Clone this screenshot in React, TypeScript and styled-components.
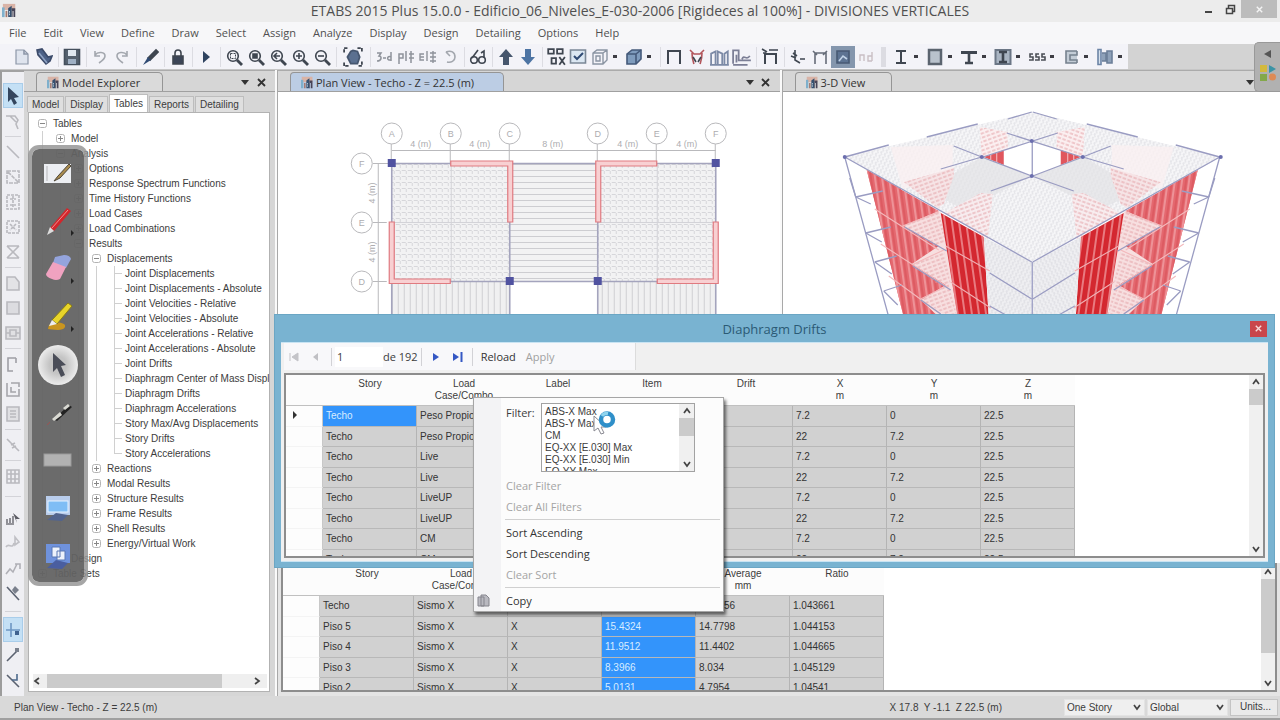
import React from 'react';
import styled, { createGlobalStyle, css } from 'styled-components';

const UI = '"Open Sans", "Noto Sans", sans-serif';
const GRID = '"Liberation Sans", Arial, sans-serif';

const Global = createGlobalStyle`
  * { box-sizing: border-box; }
  body { margin: 0; background: #d8d8d8; font-family: ${UI}; color: #3c3c3c; }
  button, select, input { font: inherit; color: inherit; margin: 0; }
  ul { list-style: none; margin: 0; padding: 0; }
`;

/* ---------- frame ---------- */
const Shell = styled.div`
  position: relative;
  display: flex;
  flex-direction: column;
  height: 100vh;
  overflow: hidden;
`;
const TitleBar = styled.header`
  display: grid;
  grid-template-columns: 82px 1fr 82px;
  height: 22px;
  background: #ececec;
  align-items: start;
`;
const TitleText = styled.h1`
  margin: 0;
  text-align: center;
  font-size: 14px;
  line-height: 21px;
  font-weight: 400;
  color: #505050;
  white-space: nowrap;
`;
const WindowButtons = styled.div`
  display: flex;
  justify-content: flex-end;
  padding-right: 3px;
`;
const WinButton = styled.button<{ $close?: boolean }>`
  width: ${p => (p.$close ? 40 : 24)}px;
  height: 18px;
  border: 0;
  padding: 0;
  display: grid;
  place-items: center;
  background: ${p => (p.$close ? '#bcbcbc' : 'transparent')};
`;
const AppIcon = styled.div`
  padding: 3px 0 0 2px;
  line-height: 0;
`;
const MenuBar = styled.nav`
  display: flex;
  height: 22px;
  padding-left: 1px;
  background: #f7f7f9;
`;
const MenuButton = styled.button`
  border: 0;
  background: none;
  padding: 0 9px 0 8px;
  font-size: 11px;
  line-height: 22px;
  color: #505050;
`;
const Toolbar = styled.div`
  display: flex;
  height: 26px;
  background: #d3d3d3;
  border-bottom: 1px solid #c6c6c6;
`;
const ToolStrip = styled.div`
  display: flex;
  align-items: center;
  padding-left: 11px;
  background: #f3f3f8;
`;
const ToolButton = styled.button<{ $w?: number; $on?: boolean }>`
  display: flex;
  align-items: center;
  justify-content: center;
  flex: none;
  width: ${p => p.$w ?? 22}px;
  height: 22px;
  padding: 0;
  border: 0;
  background: ${p => (p.$on ? '#8496ad' : 'transparent')};
`;
const Caret = styled.i`
  width: 4px;
  height: 3px;
  margin: 0 4px;
  background: #3d3d44;
`;
const ToolSep = styled.span<{ $grip?: boolean }>`
  flex: none;
  width: ${p => (p.$grip ? 13 : 6)}px;
  height: 20px;
  background: linear-gradient(#dcdce2, #dcdce2) center / ${p => (p.$grip ? 5 : 1)}px 100% no-repeat;
`;
const Workspace = styled.main`
  flex: 1;
  min-height: 0;
  display: flex;
`;
const SideTools = styled.div`
  flex: none;
  width: 24px;
  display: flex;
  flex-direction: column;
  align-items: center;
  padding-top: 11px;
  background: #efeff3;
  border-left: 2px solid #9c9c9c;
  border-top: 2px solid #a2a2a2;
`;
const SideButton = styled.button<{ $on?: boolean }>`
  flex: none;
  width: 20px;
  height: 25px;
  padding: 0;
  display: grid;
  place-items: center;
  border: 1px solid ${p => (p.$on ? '#a9cdea' : 'transparent')};
  background: ${p => (p.$on ? '#c4e0f5' : 'transparent')};
`;
const SideSep = styled.span<{ $h: number }>`
  flex: none;
  width: 16px;
  height: ${p => p.$h}px;
  background: linear-gradient(#d3d3d8, #d3d3d8) center / 100% 1px no-repeat;
`;

/* ---------- panels ---------- */
const Panel = styled.section<{ $grow?: number }>`
  ${p => (p.$grow ? css`flex: ${p.$grow} 1 0;` : css`flex: none; width: 251px;`)}
  min-width: 0;
  display: flex;
  flex-direction: column;
  background: #d6d6d6;
  border-top: 1px solid #ababab;
`;
const TabStrip = styled.div`
  display: flex;
  align-items: flex-end;
  height: 21px;
  padding: 0 6px 0 12px;
  border-bottom: 1px solid #a0a0a0;
  background: #d6d6d6;
`;
const DocTab = styled.div<{ $blue?: boolean; $w: number }>`
  display: flex;
  align-items: center;
  gap: 2px;
  width: ${p => p.$w}px;
  height: 19px;
  padding-left: 10px;
  border: 1px solid #959595;
  border-bottom: 0;
  border-radius: 4px 5px 0 0;
  background: ${p => (p.$blue ? '#bccde4' : '#dadada')};
  font-size: 11px;
  white-space: nowrap;
  color: #333;
`;
const StripTools = styled.div`
  margin-left: auto;
  display: flex;
`;
const StripButton = styled.button`
  width: 16px;
  height: 18px;
  padding: 0;
  border: 0;
  background: none;
  display: grid;
  place-items: center;
`;
const PageTabs = styled.div`
  display: flex;
  gap: 1px;
  height: 20px;
  padding: 2px 0 0 3px;
  align-items: flex-end;
`;
const PageTab = styled.button<{ $on?: boolean }>`
  height: ${p => (p.$on ? 18 : 16)}px;
  padding: 0 4px;
  border: 1px solid #bdbdbd;
  border-bottom: 0;
  background: ${p => (p.$on ? '#fff' : '#dfdfdf')};
  font-family: ${GRID};
  font-size: 10px;
  line-height: 14px;
`;
const TreeBox = styled.div`
  flex: 1;
  min-height: 0;
  display: flex;
  flex-direction: column;
  margin: 0 5px 4px 4px;
  padding: 3px 0 3px 4px;
  background: #fff;
  border: 1px solid #b2b2b2;
`;
const Tree = styled.ul`
  flex: 1;
  overflow: hidden;
`;
const TreeRow = styled.li`
  display: flex;
  height: 15px;
  font-family: ${GRID};
  font-size: 10px;
  line-height: 15px;
  white-space: nowrap;
`;
const Guide = styled.span<{ $line?: boolean; $stub?: boolean; $half?: boolean }>`
  flex: none;
  display: grid;
  place-items: center;
  width: 18px;
  height: 15px;
  background-repeat: no-repeat;
  background-image: linear-gradient(${p => (p.$line ? '#d0d0d0, #d0d0d0' : 'transparent, transparent')}),
    linear-gradient(${p => (p.$stub ? '#d0d0d0, #d0d0d0' : 'transparent, transparent')});
  background-size: 1px ${p => (p.$half ? 8 : 15)}px, 8px 1px;
  background-position: 9px 0, 9px 7px;
`;
const TreeLabel = styled.span`
  padding-left: 2px;
`;
const HScroll = styled.div`
  display: grid;
  grid-template-columns: 14px 1fr 14px;
  align-items: center;
  height: 14px;
  margin-right: 2px;
  background: #efefef;
`;
const HThumb = styled.div`
  width: 85%;
  height: 14px;
  background: #cbcbcb;
`;
const Splitter = styled.div`
  flex: none;
  width: 3px;
  background: #fafafa;
  border-right: 1px solid #a8a8a8;
`;
const Documents = styled.div`
  flex: 1;
  min-width: 0;
  display: flex;
  flex-direction: column;
`;
const Views = styled.div`
  flex: 1;
  min-height: 0;
  display: flex;
`;
const Canvas = styled.div`
  flex: 1;
  min-height: 0;
  overflow: hidden;
  background: #fff;
  svg { display: block; width: 100%; height: 224px; }
`;

/* ---------- data grids ---------- */
const ResultsPane = styled.section`
  flex: none;
  height: 133px;
  padding: 0 3px 4px 3px;
  background: #e4e4e4;
`;
const GridFrame = styled.div`
  display: flex;
  height: 100%;
  overflow: hidden;
  background: #fff;
  border: 2px solid #8d8d8d;
`;
const GridArea = styled.div`
  flex: 1;
  min-width: 0;
  overflow: hidden;
`;
const DataTable = styled.table<{ $cols: number }>`
  width: ${p => 37 + 94 * p.$cols}px;
  table-layout: fixed;
  border-collapse: separate;
  border-spacing: 0;
  font-family: ${GRID};
  font-size: 10px;
  line-height: 12px;
  white-space: nowrap;
  thead tr { height: 31px; }
  tbody tr:nth-child(odd) { height: 21px; }
  tbody tr:nth-child(even) { height: 20px; }
  th { font-weight: 400; vertical-align: top; padding: 3px 0 0; background: #fcfcfc; border-bottom: 1px solid #c0c0c0; }
`;
const Corner = styled.col` width: 37px; `;
const Col = styled.col` width: 94px; `;
const Cell = styled.td<{ $sel?: boolean; $head?: boolean }>`
  padding: 0 0 0 3px;
  overflow: hidden;
  border-right: 1px solid ${p => (p.$head ? '#c8c8c8' : '#b4b4b4')};
  border-bottom: 1px solid ${p => (p.$head ? '#f4f4f4' : '#b8b8b8')};
  background: ${p => (p.$head ? '#fdfdfd' : p.$sel ? '#3394fb' : '#d1d1d1')};
  color: ${p => (p.$sel ? '#d8ecff' : '#333')};
`;
const VScroll = styled.div<{ $w?: number }>`
  flex: none;
  display: flex;
  flex-direction: column;
  align-items: center;
  width: ${p => p.$w ?? 14}px;
  background: #f0f0f0;
`;
const VArrow = styled.span<{ $end?: boolean }>`
  height: 14px;
  display: grid;
  place-items: center;
  ${p => p.$end && 'margin-top: auto;'}
`;
const VThumb = styled.div<{ $h: number }>`
  width: 100%;
  height: ${p => p.$h}px;
  background: #cbcbcb;
`;

/* ---------- drifts window ---------- */
const Dialog = styled.section`
  position: absolute;
  left: 274px;
  right: 5px;
  top: 314px;
  height: 254px;
  display: flex;
  flex-direction: column;
  padding: 0 6px 5px;
  background: #79b3d1;
  border: 1px solid #6ba6c4;
`;
const DialogTitle = styled.div`
  display: grid;
  grid-template-columns: 18px 1fr 18px;
  align-items: center;
  height: 27px;
  text-align: center;
  h2 { margin: 0; font-size: 13px; font-weight: 400; color: #2b5a75; }
`;
const CloseButton = styled.button`
  width: 17px;
  height: 16px;
  padding: 0;
  border: 0;
  display: grid;
  place-items: center;
  background: #c9464b;
`;
const DialogBody = styled.div`
  flex: 1;
  min-height: 0;
  display: flex;
  flex-direction: column;
  padding: 0 3px 3px;
  background: #f0f0f0;
  border: 1px solid #c9e4f3;
  border-width: 1px 0 1px 0;
`;
const NavBar = styled.div`
  display: flex;
  align-items: center;
  width: 352px;
  height: 27px;
  margin-bottom: 3px;
  background: #f8f8fa;
  border-right: 1px solid #dcdcdc;
  font-size: 11px;
`;
const NavButton = styled.button<{ $dim?: boolean; $w?: number }>`
  display: grid;
  place-items: center;
  width: ${p => (p.$w ? p.$w + 'px' : 'auto')};
  height: 22px;
  padding: ${p => (p.$w ? 0 : '0 5px')};
  border: 0;
  background: none;
  color: ${p => (p.$dim ? '#a0a0a0' : '#333')};
`;
const NavSep = styled.span`
  width: 1px;
  height: 18px;
  margin: 0 3px;
  background: #d2d2d6;
`;
const RecordInput = styled.input`
  width: 48px;
  height: 20px;
  padding: 0 2px;
  border: 0;
  background: #fff;
`;
const FrameSlot = styled.div`
  flex: 1;
  min-height: 0;
`;

/* ---------- context menu ---------- */
const PopupMenu = styled.div`
  position: absolute;
  left: 473px;
  top: 397px;
  width: 251px;
  height: 215px;
  padding: 5px 3px 0 0;
  background: linear-gradient(90deg, #f3f3f5 27px, #fcfcfc 27px);
  border: 1px solid #a6a6a6;
  box-shadow: 2px 3px 3px rgba(0, 0, 0, 0.55);
  font-size: 11px;
`;
const FilterRow = styled.div`
  display: flex;
  padding-left: 32px;
  margin-bottom: 3px;
  label { width: 35px; line-height: 20px; }
`;
const ListBox = styled.div`
  display: flex;
  width: 154px;
  height: 69px;
  border: 1px solid #a2a2a2;
  background: #fff;
`;
const List = styled.select`
  flex: 1;
  min-width: 0;
  height: 67px;
  padding: 2px 0 0;
  border: 0;
  outline: 0;
  overflow: hidden;
  background: #fff;
  font-family: ${GRID};
  font-size: 10px;
  scrollbar-width: none;
  option { height: 12px; min-height: 12px; line-height: 12px; padding: 0 3px; }
`;
const PopupItem = styled.button`
  position: relative;
  display: flex;
  align-items: center;
  width: 100%;
  height: 21px;
  padding: 0 0 0 32px;
  border: 0;
  background: none;
  color: #333;
  &:disabled { color: #a4a4a4; }
  svg { position: absolute; left: 3px; }
`;
const PopupRule = styled.hr`
  height: 1px;
  margin: 2px 0 2px 31px;
  border: 0;
  background: #d0d0d0;
`;
const BusyCursor = styled.svg`
  position: absolute;
  left: 590px;
  top: 408px;
`;

/* ---------- overlays ---------- */
const PenBar = styled.div`
  position: absolute;
  left: 28px;
  top: 145px;
  width: 60px;
  height: 441px;
  display: flex;
  flex-direction: column;
  align-items: center;
  justify-content: space-between;
  padding: 4px 0 5px;
  border: 4px solid rgba(150, 150, 150, 0.85);
  border-radius: 11px;
  background: rgba(98, 98, 98, 0.94);
  background-clip: padding-box;
`;
const PenButton = styled.button<{ $on?: boolean }>`
  width: 40px;
  height: 40px;
  padding: 0;
  border: 0;
  border-radius: 50%;
  display: grid;
  place-items: center;
  background: ${p => (p.$on ? 'radial-gradient(#c4c4c4 30%, #f0f0f0 75%)' : 'none')};
`;
const Gadget = styled.aside`
  position: absolute;
  right: 0;
  top: 42px;
  width: 26px;
  height: 50px;
  display: flex;
  flex-direction: column;
  align-items: center;
  gap: 6px;
  padding-top: 7px;
  border-radius: 5px 0 0 5px;
  background: #b1b1b1;
  border: 1px solid #999;
  border-right: 0;
`;
const StatusBar = styled.footer`
  display: flex;
  align-items: center;
  height: 24px;
  padding: 0 2px 0 14px;
  gap: 2px;
  background: #d9d9d9;
  border-bottom: 2px solid #a0a0a0;
  font-family: ${GRID};
  font-size: 10px;
`;
const Coords = styled.span`
  margin-left: auto;
  padding-right: 60px;
  white-space: pre;
`;
const StatusSelect = styled.div`
  position: relative;
  display: flex;
  align-items: center;
  width: 81px;
  height: 17px;
  background: #efefef;
  border: 1px solid #e3e3e3;
  select { width: 100%; appearance: none; border: 0; background: none; padding: 0 2px; }
  svg { position: absolute; right: 3px; pointer-events: none; }
`;
const UnitsButton = styled.button`
  width: 48px;
  height: 17px;
  padding: 0 9px;
  text-align: left;
  border: 1px solid #c4c4c4;
  background: #eaeaea;
  white-space: nowrap;
  line-height: 14px;
`;

/* ---------- icons ---------- */
const D = '#3f4650';
const G = '#a3a7ae';

const Ico = ({ children, s = 18 }: { children: React.ReactNode; s?: number }) => (
  <svg width={s} height={s} viewBox="0 0 18 18" fill="none" stroke={D} strokeWidth="1.6">{children}</svg>
);
const Logo = ({ s = 17 }: { s?: number }) => (
  <svg width={s} height={s} viewBox="0 0 17 17">
    <rect x="1" y="1" width="14" height="7" fill="#d9b3a6" />
    <path d="M0 5h3v11h-3z" fill="#7fb0cc" />
    <path d="M4 9h2v7h-2z" fill="#a4786e" />
    <path d="M7 6l4-3v13h-4z" fill="#35506f" />
    <path d="M11 6h4v10h-2v-7h-1v7h-1z" fill="#474457" />
    <path d="M8 9h1v2h-1zM8 12h1v2h-1z" fill="#c8dcea" />
  </svg>
);
const Glass = ({ inner }: { inner: React.ReactNode }) => (
  <Ico><circle cx="8" cy="8" r="5.3" /><path d="M12 12l5 5" strokeWidth="2.8" />{inner}</Ico>
);

const icons: Record<string, React.ReactNode> = {
  'New model': <Ico><path d="M3 2h8l4 4v10H3z" fill="#dfe4ee" stroke="#8d97a8" strokeWidth="1.2" /><path d="M11 2v4h4" stroke="#8d97a8" /></Ico>,
  Open: <Ico><path d="M2 2l5-1 6 8 4-1-2 5-4 3-8-9z" fill="#4c6187" stroke="#3b4a69" /><path d="M4 5l8 10" stroke="#8ea2c2" /></Ico>,
  Save: <Ico><path d="M1.500 1.500h15v15h-15z" fill="#55616f" stroke="#444f5c" /><path d="M5 2h8v6H5z" fill="#dfe7f0" stroke="none" /><path d="M5 11h8v5H5z" fill="#9fb0c4" stroke="none" /></Ico>,
  Undo: <Ico><path d="M4 7c3-4 10-3 10 1 0 3-3 5-6 7M4 3v5h5" stroke={G} /></Ico>,
  Redo: <Ico><path d="M14 7C11 3 4 4 4 8c0 3 3 5 6 7M14 3v5H9" stroke={G} /></Ico>,
  Refresh: <Ico><path d="M7 10l8-8 2 2-8 8z" fill={D} /><path d="M7 9l3 3-8 5z" fill="#2f4a73" stroke="none" /></Ico>,
  Lock: <Ico><path d="M4 8h10v8H4z" fill="#3c4557" /><path d="M6 8V5a3 3 0 0 1 6 0v3" /></Ico>,
  Run: <Ico><path d="M6 3l7 6-7 6z" fill="#2f4360" stroke="none" /></Ico>,
  'Rubber band zoom': <Glass inner={<path d="M5.500 5.500h5v5h-5z" strokeDasharray="2 1" strokeWidth="1" />} />,
  'Full view': <Glass inner={<path d="M6 6h4v4H6z" fill={D} />} />,
  'Previous zoom': <Glass inner={<path d="M5 8h6M8 5L5 8l3 3" />} />,
  'Zoom in': <Glass inner={<path d="M5 8h6M8 5v6" />} />,
  'Zoom out': <Glass inner={<path d="M5 8h6" />} />,
  Pan: <Ico s={20}><path d="M1 5V1h4M13 1h4v4M17 13v4h-4M5 17H1v-4" strokeDasharray="3 1" /><path d="M4 9l3-5 2-1 4 1 2 5-2 6H7z" fill="#5b7090" stroke="#46566f" /></Ico>,
  '3-D': <Ico><path d="M2 5h4l-2 3c3 0 3 5-2 5M8 10h3M16 4v9M16 9c-4-2-5 4 0 3" stroke="#8f939b" strokeWidth="1.500" /></Ico>,
  Plan: <Ico><path d="M2 16V6h4v4H2M9 3v10M12 6h5M12 10h5M14 3v12" stroke="#8f939b" strokeWidth="1.500" /></Ico>,
  Elevation: <Ico><path d="M5 6H1v6h4M1 9h4M8 3v10M11 5h6M11 9h6M11 13h6M14 3v12" stroke="#8f939b" strokeWidth="1.400" /></Ico>,
  Rotate: <Ico><path d="M5 4c5-2 9 0 9 5 0 4-4 6-8 5M5 4l4 4" stroke={G} /></Ico>,
  Perspective: <Ico><circle cx="5" cy="12" r="3.300" /><circle cx="13" cy="12" r="3.300" /><path d="M3 10l6-8M15 10V3l-3 2" /></Ico>,
  'Story up': <Ico><path d="M9 1l7 8h-4v8H6V9H2z" fill="#46566d" stroke="none" /></Ico>,
  'Story down': <Ico><path d="M9 17l7-8h-4V1H6v8H2z" fill="#4d74a3" stroke="none" /></Ico>,
  'Object shrink': <Ico s={20}><path d="M2 2h5v4H2zM10 2h5v4h-5zM5 10h4v5H5zM12 9l5 7M17 9l-5 7" /></Ico>,
  'View options': <Ico><path d="M1.500 2h15v13h-15z" fill="#dbe7f2" stroke="#7b8896" /><path d="M5 8l3 3 6-6" stroke="#2f4a73" strokeWidth="2" /></Ico>,
  Extrusion: <Ico><path d="M2 5l4-3h10v10l-4 4H2zM2 5h10v11M12 5l4-3M5 8h4v5H5z" stroke="#8b95a3" strokeWidth="1.400" /></Ico>,
  Solid: <Ico><path d="M2 6l5-4h9v9l-5 5H2z" fill="#7f9cbd" stroke="#44597a" /><path d="M2 6h9v10M11 6l5-4" stroke="#44597a" /></Ico>,
  Undeformed: <Ico><path d="M3 16V3h12v13" strokeWidth="2" /></Ico>,
  Deformed: <Ico><path d="M2 2l4 4h6l4-4M4 5c0 6 1 8 2 11M14 5c0 6-1 8-2 11" stroke="#b3565c" /><path d="M5 9l3 5M13 9l-3 5" stroke={D} /></Ico>,
  Forces: <Ico s={20}><path d="M1 16V6l4-2v12M7 16V4l4 2v10M13 16V6l3-2v12M0 16h17" stroke="#7c8aa6" /></Ico>,
  Stresses: <Ico s={20}><path d="M1 15V3h5v9h11M4 14V7M9 11c2-5 4 2 7-3M1 16h13" stroke="#7c7f96" /></Ico>,
  Loads: <Ico><path d="M4 16V6h11v10" strokeWidth="2" /><path d="M1 1l5 3M8 2h9M2 5h3" /></Ico>,
  Axes: <Ico><path d="M6 2v10l5 3M2 8l5 2M11 11h5M4 5l4 3" /></Ico>,
  Releases: <Ico><path d="M4 16V5h11v11M2 3l4 4M16 3l-4 4" stroke="#666c78" /></Ico>,
  Shading: <Ico><path d="M3 3h12v12H3z" fill="#5d7392" stroke="#485a74" /><path d="M5 13l4-5 4 3" stroke="#c0d2e6" /></Ico>,
  Named: <Ico><path d="M3 13V7h4v6M15 4v9M15 8h-4v5h4" stroke="#c9bfc4" strokeWidth="1.400" /></Ico>,
  'Steel frame': <Ico><path d="M4 3h10M4 15h10M9 3v12" strokeWidth="2" /></Ico>,
  'Concrete frame': <Ico><path d="M3 2h12v14H3z" fill="#b9c2cc" strokeWidth="2.500" stroke="#5b646f" /></Ico>,
  'Composite beam': <Ico><path d="M1 3h16v3H1z" fill={D} stroke="none" /><path d="M5 15h8M9 5v10" strokeWidth="2.600" /></Ico>,
  'Composite column': <Ico><path d="M1.500 2h15v14h-15z" fill="#a9b4c2" stroke="#6b7685" strokeWidth="2" /><path d="M5 4h8M5 14h8M9 4v10" strokeWidth="2.600" /></Ico>,
  Joists: <Ico><path d="M5 6H2v3h3v3H1M11 6H8v3h3v3H7M17 6h-3v3h3v3h-4" stroke="#4b4f55" /></Ico>,
  'Shear wall': <Ico><path d="M15 3H4v12h11M15 3v4H8v5h7v3" fill="#c3ccd6" stroke="#76818e" /></Ico>,
  Connection: <Ico><path d="M2 1.500h3v15H2z" fill="#d5e0ec" stroke="#6c84a6" /><path d="M6 5h4v8H6M11 3h5v12h-5z" fill="#8ea1b9" stroke="#6c7f99" /></Ico>,
};

type Tool = { i: string; w?: number; on?: boolean; drop?: boolean };
const tools: (string | Tool)[] = [
  'New model', 'Open', '|', 'Save', '|', 'Undo', 'Redo', '|', 'Refresh', '|', 'Lock', '|', 'Run', '|',
  'Rubber band zoom', 'Full view', 'Previous zoom', 'Zoom in', 'Zoom out', '|', { i: 'Pan', w: 28 }, '|',
  '3-D', 'Plan', 'Elevation', 'Rotate', '|', 'Perspective', '|', 'Story up', 'Story down', '|', 'Object shrink', 'View options',
  { i: 'Extrusion', drop: true }, { i: 'Solid', drop: true }, '|', 'Undeformed', { i: 'Deformed', w: 24 }, 'Forces', 'Stresses', '|',
  'Loads', '|', 'Axes', 'Releases', { i: 'Shading', w: 24, on: true }, 'Named', '||',
  ...['Steel frame', 'Concrete frame', 'Composite beam', 'Composite column', 'Joists', 'Shear wall', 'Connection'].map(i => ({ i, drop: true })),
];

const S = '#b9b9be';
const sideShapes: Record<string, React.ReactNode> = {
  Select: <path d="M4 0l11 10-5 1 3 5-3 2-3-6-3 3z" fill="#34465f" stroke="none" />,
  Reshape: <path d="M2 4h9l3 4-2 4 2 5M6 4l6 6" stroke={S} />,
  'Draw beam': <path d="M3 3l12 12" stroke={S} />,
  'Quick beam': <path d="M3 3h12v12H3zM14 14L4 4" stroke={S} strokeDasharray="4 1" />,
  'Quick column': <path d="M3 2h12v14H3zM9 3v12M6 6h6M6 12h6" stroke={S} strokeDasharray="3 1" />,
  'Quick secondary': <path d="M3 3h12v12H3zM6 6l6 6M12 6l-6 6" stroke={S} strokeDasharray="3 1" />,
  'Quick brace': <path d="M3 3l12 12M15 3L3 15M3 3h12M3 15h12" stroke={S} />,
  'Draw floor': <path d="M3 3h8l4 5v8H3z" stroke={S} fill="#e3e3e6" />,
  'Rectangular floor': <path d="M3 3h12v12H3z" stroke={S} fill="#dcdce0" />,
  'Quick floor': <path d="M2 3h14v12H2zM6 6h6v6H6zM2 9h4M12 9h4" stroke={S} fill="#e0e0e3" />,
  'Draw wall': <path d="M12 3H4v13h5M12 3v5" stroke="#9f9fa5" />,
  'Quick wall': <path d="M3 3v13h12V9M7 3h8v4M7 7v5h5" stroke="#a5a5ab" />,
  'Wall opening': <path d="M3 2h12v14H3zM6 6h6M6 9h6M6 12h6" stroke={S} fill="#e0e0e3" />,
  'Draw link': <path d="M3 3l12 12M7 9l4-2M8 12l4-2" stroke={S} />,
  'Draw grid': <path d="M3 3h12v13H3zM7 3v13M11 3v13M3 7h12M3 12h12" stroke={S} />,
  'Select all': <><path d="M3 14v-4M6 14V9M9 14V7M2 15h8" stroke="#77777e" /><path d="M9 4l7 6h-4l1 4z" fill="#5c5c64" stroke="none" /></>,
  'Previous selection': <path d="M2 13c3-5 6 3 8-4M11 3v8l4-3z" stroke="#c0c0c5" />,
  'Clear selection': <path d="M2 15l4-5 3 3 4-8M11 5h5v5" stroke="#b0b0b6" />,
  'Snap lines': <><path d="M3 3l12 13" stroke="#5b6270" /><path d="M11 2l4 4-4 4-3-4z" fill="#7a808c" stroke="none" /></>,
  'Snap points': <><path d="M2 9h14M7 2v14" stroke="#6e97c4" /><path d="M11 10h4v4h-4z" fill="#3f628f" stroke="none" /></>,
  'Snap ends': <><path d="M3 15L14 4" stroke="#5b6270" /><path d="M11 2h4v4h-4z" fill="#7a808c" stroke="none" /></>,
  'Snap perpendicular': <><path d="M3 4l12 12" stroke="#5b6270" /><path d="M13 3v6H8" stroke="#4d6a8c" /></>,
};
const side: (string | number)[] = [
  'Select', 'Reshape', 6, 'Draw beam', 'Quick beam', 'Quick column', 'Quick secondary', 'Quick brace', 6,
  'Draw floor', 'Rectangular floor', 'Quick floor', 6, 'Draw wall', 'Quick wall', 'Wall opening', 6, 'Draw link', 6, 'Draw grid', 17,
  'Select all', 'Previous selection', 'Clear selection', 'Snap lines', 12, 'Snap points', 'Snap ends', 'Snap perpendicular',
];

const Chevron = ({ dir, s = 8 }: { dir: 'up' | 'down' | 'left' | 'right'; s?: number }) => {
  const d = { up: 'M1 6l3-4 3 4', down: 'M1 2l3 4 3-4', left: 'M6 1L2 4l4 3', right: 'M2 1l4 3-4 3' }[dir];
  return <svg width={s} height={s} viewBox="0 0 8 8" fill="none" stroke="#444" strokeWidth="1.700"><path d={d} /></svg>;
};
const Cross = ({ c = '#333', s = 9 }: { c?: string; s?: number }) => (
  <svg width={s} height={s} viewBox="0 0 9 9" stroke={c} strokeWidth="1.800"><path d="M1 1l7 7M8 1L1 8" /></svg>
);
const StripControls = ({ close = true }: { close?: boolean }) => (
  <StripTools>
    <StripButton aria-label="Window list"><svg width="8" height="5" viewBox="0 0 8 5"><path d="M0 0h8L4 5z" fill="#333" /></svg></StripButton>
    {close ? <StripButton aria-label="Close pane"><Cross /></StripButton> : <StripButton aria-hidden />}
  </StripTools>
);

/* ---------- explorer tree ---------- */
type Node = { t: string; d: number; g?: '+' | '-'; last?: boolean };
const leafs = ['Joint Displacements', 'Joint Displacements - Absolute', 'Joint Velocities - Relative', 'Joint Velocities - Absolute',
  'Joint Accelerations - Relative', 'Joint Accelerations - Absolute', 'Joint Drifts', 'Diaphragm Center of Mass Displacements',
  'Diaphragm Drifts', 'Diaphragm Accelerations', 'Story Max/Avg Displacements', 'Story Drifts', 'Story Accelerations'];
const tree: Node[] = [
  { t: 'Tables', d: 0, g: '-' }, { t: 'Model', d: 1, g: '+' }, { t: 'Analysis', d: 1, g: '-' },
  ...['Options', 'Response Spectrum Functions', 'Time History Functions', 'Load Cases', 'Load Combinations'].map(t => ({ t, d: 2, g: '+' as const })),
  { t: 'Results', d: 2, g: '-' }, { t: 'Displacements', d: 3, g: '-' },
  ...leafs.map((t, i) => ({ t, d: 4, last: i === leafs.length - 1 })),
  ...['Reactions', 'Modal Results', 'Structure Results', 'Frame Results', 'Shell Results', 'Energy/Virtual Work'].map(t => ({ t, d: 3, g: '+' as const })),
  { t: 'Design', d: 1, g: '+' }, { t: 'Table Sets', d: 0, g: '+' },
];
const Expander = ({ g }: { g: '+' | '-' }) => (
  <svg width="9" height="9" viewBox="0 0 9 9" fill="#fff" stroke="#b4b4b4">
    <rect x="0.500" y="0.500" width="8" height="8" rx="2" /><path d={g === '+' ? 'M2 4.500h5M4.500 2v5' : 'M2 4.500h5'} stroke="#888" />
  </svg>
);

/* ---------- drawings ---------- */
const cx = [392, 451, 510, 598, 657, 716];
const label = { fontSize: 9, fontFamily: 'Liberation Sans', fill: '#adadb0', stroke: 'none', textAnchor: 'middle' as const };
const PlanDrawing = () => (
  <svg viewBox="278 92 502 224" preserveAspectRatio="xMidYMin slice" fill="none">
    <defs>
      <pattern id="mesh" width="6" height="6" patternUnits="userSpaceOnUse"><path d="M0 2.500h4M4.500 3v3" stroke="#d6d6da" /></pattern>
      <pattern id="rows" width="10" height="6" patternUnits="userSpaceOnUse"><path d="M0 2.500h10" stroke="#cdcdd1" /></pattern>
      <pattern id="bars" width="6" height="10" patternUnits="userSpaceOnUse"><path d="M2.500 0v10" stroke="#cfcfd2" /></pattern>
    </defs>
    <path d="M392 163h324v118H392z" fill="#f2f2f3" />
    <path d="M392 163h118v118H392zM598 163h118v118H598z" fill="url(#mesh)" />
    <path d="M510 163h88v118h-88z" fill="url(#rows)" />
    <path d="M392 281h118v40H392zM598 281h118v40H598z" fill="#f0f0f1" />
    <path d="M392 281h118v40H392zM598 281h118v40H598z" fill="url(#bars)" />
    <g stroke="#d3d3d8"><path d="M451.500 163v118M657.500 163v118M392 222.500h118M598 222.500h118" /></g>
    <g stroke="#b9b9bc">
      <path d="M392 150.500h324M378.500 163v160M373 163.500h20M373 222.500h14M373 281.500h14" />
      {cx.map((x, i) => <g key={x}><circle cx={x} cy="133.500" r="10.500" fill="#fff" /><path d={`M${x - 0.5} 144v19`} /><text {...label} x={x} y="137">{'ABCDEF'[i]}</text></g>)}
      {[163, 222, 281].map((y, i) => <g key={y}><circle cx="362" cy={y + 0.5} r="10.500" fill="#fff" /><text {...label} x="362" y={y + 4}>{'FED'[i]}</text></g>)}
    </g>
    <g>
      {[[421, 4], [480, 4], [553, 8], [628, 4], [687, 4]].map(([x, n]) => <text {...label} key={x} x={x} y="147">{n} (m)</text>)}
      <text {...label} transform="translate(375 193) rotate(-90)">4 (m)</text>
      <text {...label} transform="translate(375 252) rotate(-90)">4 (m)</text>
    </g>
    <g stroke="#a4a4bd" strokeWidth="1.600">
      <path d="M392 163.500h324M392 281.500h324M392 163v160M510 163v160M598 163v160M716 163v160" />
    </g>
    <g stroke="#e07a80" fill="#f8d0d2" strokeWidth="1.200">
      <path d="M451 161h62v61h-5v-56h-57z" /><path d="M657 161h-61v61h5v-56h56z" />
      <path d="M389.500 222v61.500h61v-4.500h-56v-57z" /><path d="M718.500 222v61.500h-61v-4.500h56v-57z" />
    </g>
    <g fill="#5052a0">{[[392, 163], [716, 163], [510, 281], [598, 281]].map(([x, y]) => <rect key={`${x}-${y}`} x={x - 4} y={y - 4} width="8" height="8" />)}</g>
  </svg>
);

const HalfTower = () => (
  <g>
    <path d="M866 170L940 212 957 317H903z" fill="#f7dfe0" />
    <path d="M866 170L900 187 914 317H903z" fill="#e98d92" />
    <path d="M866 170L938 211 902 226l36 20-27 18 34 21-25 15 18 17H903z" fill="#e4686f" />
    <path d="M866 170L938 211 902 226l36 20-27 18 34 21-25 15 18 17H903z" fill="url(#ribs)" />
    <path d="M902 225l36-13 8 30-12 4zM911 264l32-14 7 34-10 3zM920 300l28-15 8 29h-12z" fill="url(#pinkmesh)" />
    <path d="M940 213l43 24 5 80h-31z" fill="#d5262e" />
    <path d="M940 213l43 24 5 80h-31z" fill="url(#ribs)" />
    <path d="M983 237l48 25v55h-43z" fill="#efeff2" />
    <path d="M983 237l48 25v55h-43z" fill="url(#greymesh)" />
    <g stroke="#f3b9bc" strokeWidth="1.100" fill="none">
      <path d="M874 209l64 41M880 244l65 42M888 276l52 38M938 212l-36 14M943 250l-32 15M948 285l-28 14" /><path d="M945 246l44 25M950 282l40 26" stroke="#efb0b4" />
    </g>
  </g>
);
const TowerLines = () => (
  <g>
    <path d="M844 157l187 105M844 157l44 160" /><path d="M844 157l44-12M926 137l51-13M1007 119l24-7" />
    <path d="M855 197l27-6M865 233l25-6M874 262l22-6M883 291l18-6M855 197l15 7M865 233l16 9M874 262l17 12M883 291l14 14M849 178l6 19" />
    <path d="M904 227l42 24M912 266l38 24M920 300l20 14M989 273l42 26M989 306l16 9" />
    <path d="M1006 133l75 24M953 146l28 11 50 19 42 15M940 169l41-12" />
  </g>
);
const TowerDrawing = () => (
  <svg viewBox="782 92 498 224" preserveAspectRatio="xMidYMin slice" fill="none">
    <defs>
      <pattern id="ribs" width="7" height="12" patternUnits="userSpaceOnUse" patternTransform="rotate(-8)"><path d="M1 0v12" stroke="#f3a9ad" strokeWidth="1.300" /><path d="M4 0v12" stroke="#c8323a" strokeWidth="0.800" strokeOpacity="0.600" /></pattern>
      <pattern id="pinkmesh" width="5" height="4" patternUnits="userSpaceOnUse" patternTransform="rotate(-20)"><path d="M0 1h3.500" stroke="#e3a0a5" /></pattern>
      <pattern id="greymesh" width="4" height="4" patternUnits="userSpaceOnUse" patternTransform="rotate(28)"><path d="M0 1h2M2 2v1.500" stroke="#d3d3d9" strokeWidth="0.900" /></pattern>
    </defs>
    <HalfTower />
    <g transform="translate(2063 0) scale(-1 1)"><HalfTower /></g>
    <path d="M844 157l187-45 189 45-189 105z" fill="#f6f6f8" />
    <path d="M844 157l187-45 189 45-189 105z" fill="url(#greymesh)" />
    <path d="M945 178l36-21 50 19 52-19 36 21v22l-20 10-68-34-68 34-18-10z" fill="#e2e2e6" fillOpacity="0.700" />
    {[0, 1].map(i => (
      <g key={i} transform={i ? 'translate(2063 0) scale(-1 1)' : undefined}>
        <path d="M890 147l62-2v30l-50 14z" fill="#faf0f1" fillOpacity="0.800" />
        <path d="M903 182l50-14v8l-10 28-6 4z" fill="#f6e4e6" /><path d="M903 182l50-14v8l-10 28-6 4z" fill="url(#pinkmesh)" />
        <path d="M979 127l28 5v20l-26 5z" fill="#fbeff0" /><path d="M979 127l28 5v20l-26 5z" fill="url(#pinkmesh)" />
        <path d="M944 213l36-20 12 1-5 45z" fill="#f8ecee" fillOpacity="0.900" /><path d="M944 213l36-20 12 1-5 45z" fill="url(#pinkmesh)" />
      </g>
    ))}
    <path d="M1031 141l50 16-50 19-50-19z" fill="#fff" />
    <path d="M983 157l20-7v15zM1080 157l-20-7v15z" fill="#e0565d" /><path d="M990 154v6M996 152v11M1067 152v11M1073 154v6" stroke="#f6c5c8" />
    <g stroke="#9a9cc2" strokeWidth="1.300"><TowerLines /><g transform="translate(2063 0) scale(-1 1)"><TowerLines /></g><path d="M1031.500 141v35M1031.500 262v55" /></g>
    <g fill="#6c6fae">{[[844, 157], [1220, 157], [1031, 141], [1031, 176], [981, 157], [1082, 157]].map(([x, y]) => <circle key={`${x}-${y}`} cx={x} cy={y} r="2" />)}</g>
  </svg>
);

/* ---------- table content ---------- */
const driftCols = [['Story'], ['Load', 'Case/Combo'], ['Label'], ['Item'], ['Drift'], ['X', 'm'], ['Y', 'm'], ['Z', 'm']];
const cases = ['Peso Propio', 'Peso Propio', 'Live', 'Live', 'LiveUP', 'LiveUP', 'CM', 'CM'];
const driftRows = cases.map((c, i) => ['Techo', c, '', '', '', i % 2 ? '22' : '7.2', i % 2 ? '7.2' : '0', '22.5']);
const dispCols = [['Story'], ['Load', 'Case/Combo'], ['Item'], ['Maximum', 'mm'], ['Average', 'mm'], ['Ratio']];
const dispRows = [
  ['Techo', 'Sismo X', 'X', '18.7604', '17.9756', '1.043661'],
  ['Piso 5', 'Sismo X', 'X', '15.4324', '14.7798', '1.044153'],
  ['Piso 4', 'Sismo X', 'X', '11.9512', '11.4402', '1.044665'],
  ['Piso 3', 'Sismo X', 'X', '8.3966', '8.034', '1.045129'],
  ['Piso 2', 'Sismo X', 'X', '5.0131', '4.7954', '1.04541'],
];
const Grid = ({ cols, rows, selected, marker }: { cols: string[][]; rows: string[][]; selected: (r: number, c: number) => boolean; marker?: boolean }) => (
  <DataTable $cols={cols.length}>
    <colgroup><Corner />{cols.map((_, i) => <Col key={i} />)}</colgroup>
    <thead><tr><th />{cols.map((c, i) => <th key={i} scope="col">{c.map((l, k) => <React.Fragment key={k}>{k > 0 && <br />}{l}</React.Fragment>)}</th>)}</tr></thead>
    <tbody>
      {rows.map((r, i) => (
        <tr key={i}>
          <Cell $head>{marker && i === 0 && <svg width="9" height="8" viewBox="0 0 9 8"><path d="M4 0l4 4-4 4z" fill="#333" /></svg>}</Cell>
          {r.map((v, k) => <Cell key={k} $sel={selected(i, k)}>{v}</Cell>)}
        </tr>
      ))}
    </tbody>
  </DataTable>
);

/* ---------- annotation palette ---------- */
const Flyout = <path d="M33 29l3 3-3 3z" fill="#222" />;
const pens: [string, React.ReactNode][] = [
  ['Page', <><rect x="6" y="11" width="27" height="19" fill="#eceef2" /><path d="M9 13v15" stroke="#b5b5b8" /><path d="M16 28l4-5 11-12 2 2-11 12z" fill="#a98b4e" stroke="#4d4638" /></>],
  ['Pen', <><path d="M12 27L29 7l4 3-17 20z" fill="#d3262c" /><path d="M14 27L30 9" stroke="#f08d8f" /><path d="M12 26l4 4-7 4z" fill="#ddd" />{Flyout}</>],
  ['Eraser', <><path d="M17 8l9-2q6 0 7 4l-5 9-13-5z" fill="#94a4dd" /><path d="M15 13l13 5-6 12q-4 2-8 0-6-2-6-5z" fill="#f0a2c0" />{Flyout}</>],
  ['Highlighter', <><path d="M11 28c4-4 18-3 16 2s-14 2-17 2z" fill="#c9951f" /><path d="M14 23L30 6l4 3-15 18z" fill="#e8d52a" stroke="#8a7c16" /><path d="M14 23l5 4-8 2z" fill="#eee" />{Flyout}</>],
  ['Pick', <path d="M15 8l13 12-5 1 4 9-4 2-4-9-4 4z" fill="#4a4d58" />],
  ['Pointer', <><path d="M16 26l15-14 3 2-15 14z" fill="#222" /><path d="M14 26l8-7 2 3-8 6zM25 15l5-4 2 2-5 4z" fill="#d9d9d2" /><path d="M9 32l3-3" stroke="#9b5252" /></>],
  ['Ruler', <rect x="6" y="13" width="27" height="12" fill="#b2b2b2" stroke="#9a9a9a" />],
  ['Screen', <><rect x="8" y="7" width="24" height="19" fill="#b9cdec" /><rect x="10" y="12" width="20" height="11" fill="#7fbdf5" stroke="#e7f3ff" /><path d="M9 31l9-7 12 2-6 6z" fill="#52648e" /></>],
  ['Pages', <><rect x="8" y="7" width="24" height="19" fill="#6f92dc" /><path d="M14 10h8v10h-8zM19 14h8v9h-8z" fill="#eef3fb" stroke="#5b78b4" /><path d="M9 31l9-8 12 3-6 6z" fill="#4a5ea0" /></>],
];

const menus = ['File', 'Edit', 'View', 'Define', 'Draw', 'Select', 'Assign', 'Analyze', 'Display', 'Design', 'Detailing', 'Options', 'Help'];

export default function App() {
  return (
    <Shell>
      <Global />
      <TitleBar>
        <AppIcon><Logo s={15} /></AppIcon>
        <TitleText>ETABS 2015 Plus 15.0.0 - Edificio_06_Niveles_E-030-2006 [Rigideces al 100%] - DIVISIONES VERTICALES</TitleText>
        <WindowButtons>
          <WinButton aria-label="Minimize"><svg width="9" height="9"><path d="M1 6h7v2H1z" fill="#444" /></svg></WinButton>
          <WinButton aria-label="Restore"><svg width="11" height="11" fill="none" stroke="#444"><path d="M1.500 4.500h6v5h-6zM3.500 4V1.500h6v6H8" strokeWidth="1.500" /></svg></WinButton>
          <WinButton $close aria-label="Close"><Cross c="#f4f4f4" s={7} /></WinButton>
        </WindowButtons>
      </TitleBar>
      <MenuBar>{menus.map(m => <MenuButton key={m}>{m}</MenuButton>)}</MenuBar>
      <Toolbar>
        <ToolStrip>
          {tools.map((t, i) => {
            if (t === '|' || t === '||') return <ToolSep key={i} $grip={t === '||'} />;
            const o: Tool = typeof t === 'string' ? { i: t } : t;
            return (
              <ToolButton key={i} aria-label={o.i} $w={o.drop ? 34 : o.w} $on={o.on}>
                {icons[o.i]}{o.drop && <Caret />}
              </ToolButton>
            );
          })}
        </ToolStrip>
      </Toolbar>

      <Workspace>
        <SideTools>
          {side.map((s, i) => typeof s === 'number'
            ? <SideSep key={i} $h={s} />
            : <SideButton key={i} aria-label={s} $on={s === 'Select' || s === 'Snap points'}><Ico>{sideShapes[s]}</Ico></SideButton>)}
        </SideTools>

        <Panel>
          <TabStrip>
            <DocTab $w={127}><Logo s={13} />Model Explorer</DocTab>
            <StripControls />
          </TabStrip>
          <PageTabs>
            {['Model', 'Display', 'Tables', 'Reports', 'Detailing'].map(t => <PageTab key={t} $on={t === 'Tables'}>{t}</PageTab>)}
          </PageTabs>
          <TreeBox>
            <Tree>
              {tree.map((n, i) => (
                <TreeRow key={i}>
                  {Array.from({ length: n.d }, (_, k) => <Guide key={k} $line />)}
                  <Guide $line={!n.g} $stub={!n.g} $half={n.last}>{n.g && <Expander g={n.g} />}</Guide>
                  <TreeLabel>{n.t}</TreeLabel>
                </TreeRow>
              ))}
            </Tree>
            <HScroll><Chevron dir="left" /><HThumb /><Chevron dir="right" /></HScroll>
          </TreeBox>
        </Panel>
        <Splitter />

        <Documents>
          <Views>
            <Panel $grow={502}>
              <TabStrip>
                <DocTab $blue $w={214}><Logo s={13} />Plan View - Techo - Z = 22.5 (m)</DocTab>
                <StripControls />
              </TabStrip>
              <Canvas><PlanDrawing /></Canvas>
            </Panel>
            <Splitter />
            <Panel $grow={498}>
              <TabStrip>
                <DocTab $w={97}><Logo s={13} />3-D View</DocTab>
                <StripControls close={false} />
              </TabStrip>
              <Canvas><TowerDrawing /></Canvas>
            </Panel>
          </Views>
          <ResultsPane>
            <GridFrame>
              <GridArea><Grid cols={dispCols} rows={dispRows} selected={(r, c) => c === 3 && r > 0} /></GridArea>
              <VScroll>
                <VArrow><Chevron dir="up" /></VArrow><VThumb $h={74} /><VArrow $end><Chevron dir="down" /></VArrow>
              </VScroll>
            </GridFrame>
          </ResultsPane>
        </Documents>
      </Workspace>

      <StatusBar>
        <span>Plan View - Techo - Z = 22.5 (m)</span>
        <Coords>{'X 17.8  Y -1.1  Z 22.5 (m)'}</Coords>
        <StatusSelect><select aria-label="Story scope"><option>One Story</option></select><Chevron dir="down" /></StatusSelect>
        <StatusSelect><select aria-label="Coordinate system"><option>Global</option></select><Chevron dir="down" /></StatusSelect>
        <UnitsButton>Units...</UnitsButton>
      </StatusBar>

      <Dialog>
        <DialogTitle><span /><h2>Diaphragm Drifts</h2><CloseButton aria-label="Close"><Cross c="#f6dada" s={7} /></CloseButton></DialogTitle>
        <DialogBody>
          <NavBar>
            <NavButton $w={20} aria-label="First"><svg width="10" height="10"><path d="M1 1v8M9 1v8L3 5z" fill="#c4c4c8" stroke="#c4c4c8" /></svg></NavButton>
            <NavButton $w={24} aria-label="Previous"><svg width="8" height="8"><path d="M6 0v8L1 4z" fill="#c0c0c4" /></svg></NavButton>
            <NavSep />
            <RecordInput aria-label="Record" defaultValue="1" />
            <span>de 192</span>
            <NavSep />
            <NavButton $w={22} aria-label="Next"><svg width="8" height="10"><path d="M1 1v8l6-4z" fill="#3558c4" /></svg></NavButton>
            <NavButton $w={22} aria-label="Last"><svg width="12" height="10"><path d="M1 1v8l6-4z" fill="#3558c4" /><path d="M9.500 0v10" stroke="#3558c4" strokeWidth="2" /></svg></NavButton>
            <NavSep />
            <NavButton>Reload</NavButton>
            <NavButton $dim>Apply</NavButton>
          </NavBar>
          <FrameSlot>
            <GridFrame>
              <GridArea><Grid cols={driftCols} rows={driftRows} marker selected={(r, c) => r === 0 && c === 0} /></GridArea>
              <VScroll>
                <VArrow><Chevron dir="up" /></VArrow><VThumb $h={16} /><VArrow $end><Chevron dir="down" /></VArrow>
              </VScroll>
            </GridFrame>
          </FrameSlot>
        </DialogBody>
      </Dialog>

      <PopupMenu>
        <FilterRow>
          <label htmlFor="filter">Filter:</label>
          <ListBox>
            <List id="filter" multiple>
              {['ABS-X Max', 'ABS-Y Max', 'CM', 'EQ-XX [E.030] Max', 'EQ-XX [E.030] Min', 'EQ-YY Max'].map(o => <option key={o}>{o}</option>)}
            </List>
            <VScroll $w={15}><VArrow><Chevron dir="up" /></VArrow><VThumb $h={18} /><VArrow $end><Chevron dir="down" /></VArrow></VScroll>
          </ListBox>
        </FilterRow>
        <PopupItem disabled>Clear Filter</PopupItem>
        <PopupItem disabled>Clear All Filters</PopupItem>
        <PopupRule />
        <PopupItem>Sort Ascending</PopupItem>
        <PopupItem>Sort Descending</PopupItem>
        <PopupItem disabled>Clear Sort</PopupItem>
        <PopupRule />
        <PopupItem>
          <svg width="13" height="13" viewBox="0 0 13 13" fill="#b9b9c0" stroke="#85858d"><path d="M1 3h6v9H1zM4 1h5l3 3v8H4z" /></svg>
          Copy
        </PopupItem>
      </PopupMenu>
      <BusyCursor width="30" height="30" viewBox="0 0 30 30">
        <path d="M4 8v15l4-3 3 6 3-1-3-6h5z" fill="#fff" stroke="#8a8a92" />
        <circle cx="17" cy="11.500" r="6" fill="none" stroke="#2f8fc9" strokeWidth="4.500" />
        <path d="M12 8a6 6 0 0 1 6-2.500" fill="none" stroke="#8fd4ee" strokeWidth="3" />
      </BusyCursor>

      <PenBar>
        {pens.map(([n, g]) => <PenButton key={n} aria-label={n} $on={n === 'Pick'}><svg width="40" height="40" viewBox="0 0 40 40" fill="none">{g}</svg></PenButton>)}
      </PenBar>
      <Gadget>
        <svg width="8" height="8"><path d="M7 0v8L0 4z" fill="#555" /></svg>
        <svg width="18" height="18"><path d="M1 1h7v7H1z" fill="#d3b93c" /><path d="M10 1l7 4-7 4z" fill="#3a93a5" /><path d="M1 10h7v7H1z" fill="#83a84a" /><circle cx="13.500" cy="13" r="3.500" fill="#dd8a55" /></svg>
      </Gadget>
    </Shell>
  );
}
